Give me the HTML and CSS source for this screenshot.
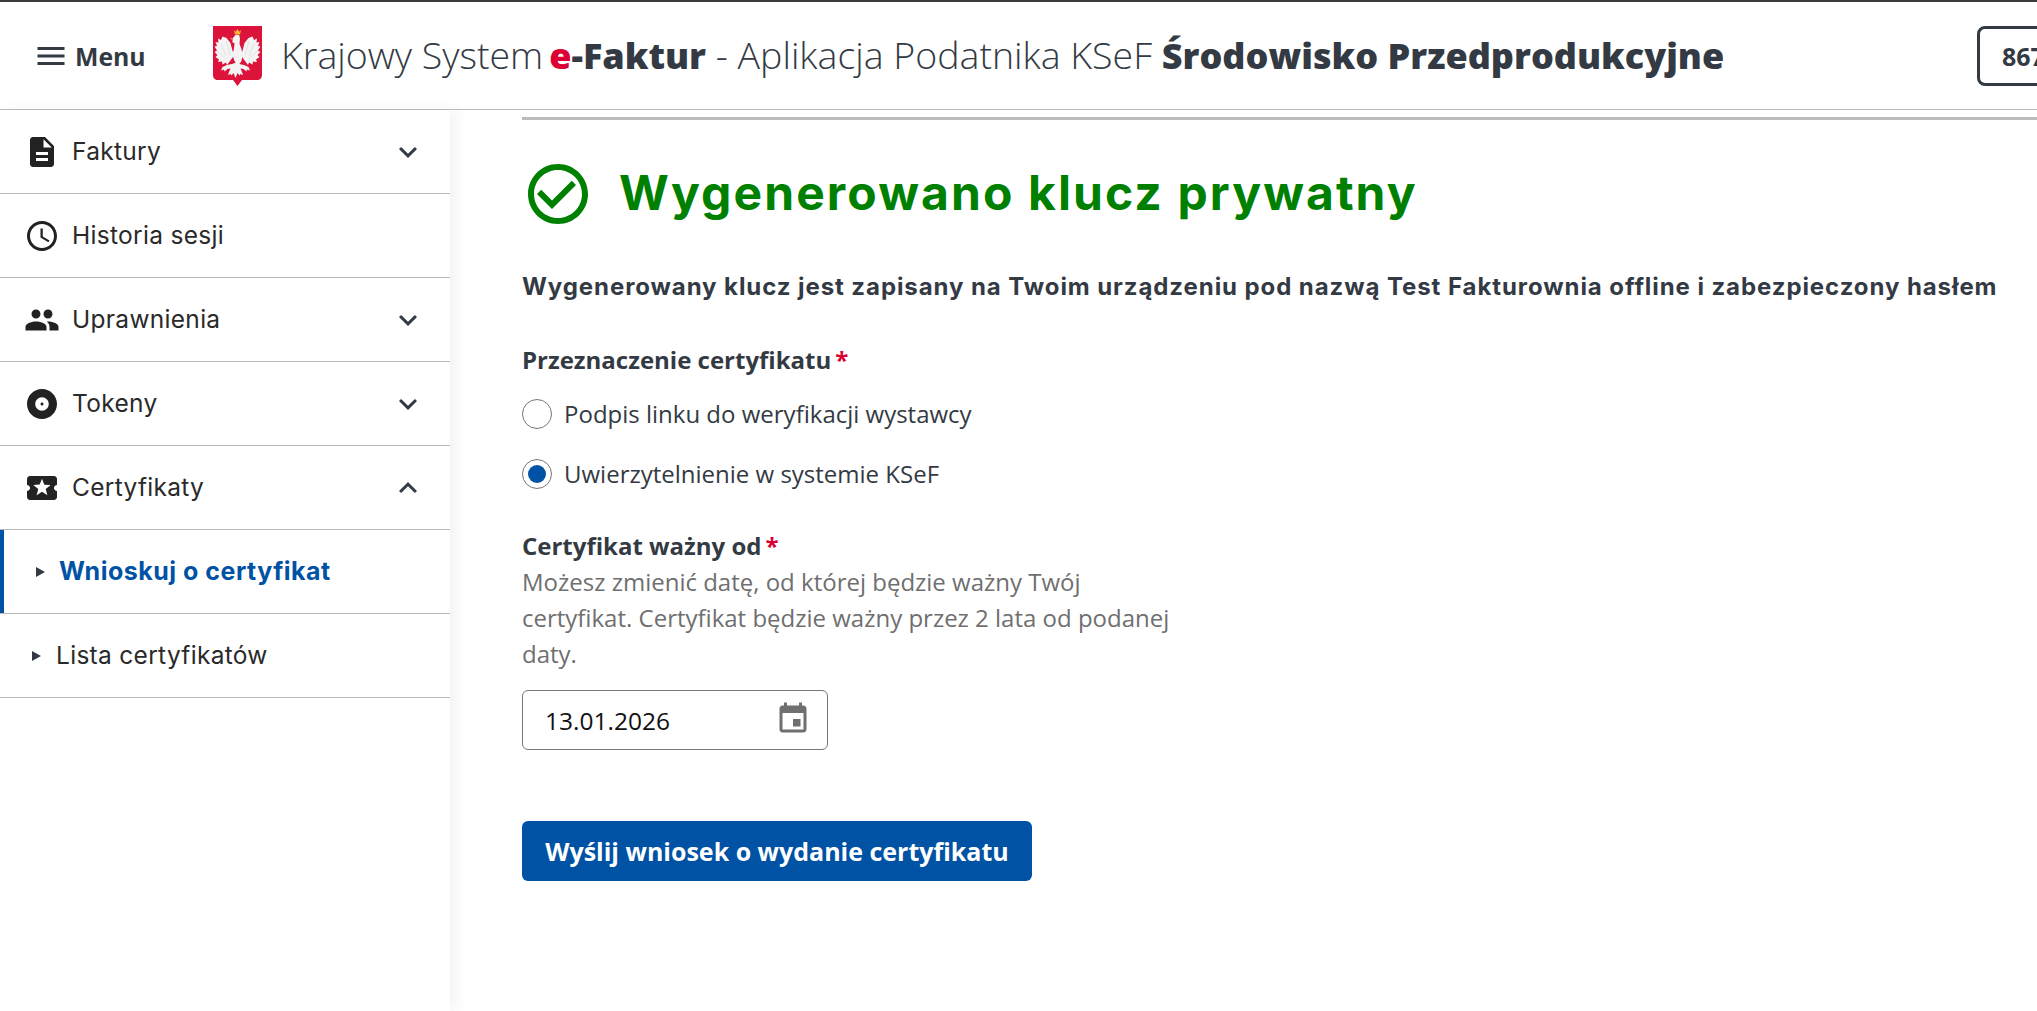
FILE: index.html
```html
<!DOCTYPE html>
<html lang="pl">
<head>
<meta charset="utf-8">
<title>Krajowy System e-Faktur</title>
<link rel="stylesheet" href="styles.css">
</head>
<body>
<header class="topbar">
  <button class="menu-btn" type="button">
    <svg class="ic36" viewBox="0 0 24 24"><path d="M3 18h18v-2H3v2zm0-5h18v-2H3v2zm0-7v2h18V6H3z"/></svg>
    <span>Menu</span>
  </button>
  <svg class="emblem" viewBox="0 0 49 60">
    <path fill="#dc143c" d="M0 0h49v49c0 3-2 5-5 5H29l-4.500 6-4.500-6H5c-3 0-5-2-5-5z"/>
    <path fill="#f5b82e" d="M21 4l1.800 1.800L24.500 3l1.700 2.800L28 4l-1 4.500h-5z"/>
    <g fill="#f4f4f4">
      <path d="M19.500 12.500l3-3.500h3.500l1 3-.5 6 2 5 1 6-1 6-3.500 5-3.500-5-2-6 1.500-7 .5-5-2-.5z"/>
      <path d="M19.500 25l-2-8-4-5-4-1.500L8 14l-3-1.500.5 4-3-.5 1.500 4-2.500.5 2.500 4-2.500 1.500 3 3-2 2 3.500 2.500-1 2.500 4-.5.5 3 3.500-2 1 2.500 3-4 3-4 1-4z"/>
      <path d="M29.500 25l2-8 4-5 4-1.500L41 14l3-1.500-.5 4 3-.5-1.500 4 2.500.5-2.500 4 2.500 1.500-3 3 2 2-3.500 2.500 1 2.500-4-.5-.5 3-3.500-2-1 2.500-3-4-3-4-1-4z"/>
      <path d="M24.500 36l-5.500 2-5 1-4.500 2-1.500 3.500 3-1 .5 2 3-2.500 3-.5-1.500 3.500-1 3 2.500-1 1 1.500 2-2.500 2 5 2-5 2 2.500 1-1.500 2.500 1-1-3-1.500-3.500 3 .5 3 2.500.5-2 3 1-1.500-3.500-4.500-2-5-1z"/>
    </g>
    <g stroke="#d8d8d8" stroke-width=".7" fill="none">
      <path d="M8 18l5 12M13 15l4 14M4 24l9 9"/>
      <path d="M41 18l-5 12M36 15l-4 14M45 24l-9 9"/>
    </g>
    <path fill="#f5b82e" d="M19 12l-2 .8 2 .8z"/>
  </svg>
  <h1 class="app-title">Krajowy System<b class="ef"><i>e</i>-Faktur</b> - Aplikacja Podatnika KSeF <b class="env">Środowisko Przedprodukcyjne</b></h1>
  <div class="nip">8672190431</div>
</header>
<div class="layout">
  <aside class="sidebar">
    <nav>
      <a class="row">
        <svg class="ic36 side-ic" viewBox="0 0 24 24"><path d="M14 2H6c-1.100 0-1.990.9-1.990 2L4 20c0 1.100.89 2 1.990 2H18c1.100 0 2-.9 2-2V8l-6-6zm2 16H8v-2h8v2zm0-4H8v-2h8v2zm-3-5V3.500L18.500 9H13z"/></svg>
        <span class="row-label">Faktury</span>
        <svg class="ic36 chev" viewBox="0 0 24 24"><path d="M16.590 8.590L12 13.170 7.410 8.590 6 10l6 6 6-6z"/></svg>
      </a>
      <a class="row">
        <svg class="ic36 side-ic" viewBox="0 0 24 24"><path d="M11.990 2C6.470 2 2 6.480 2 12s4.470 10 9.990 10C17.520 22 22 17.520 22 12S17.520 2 11.990 2zM12 20c-4.420 0-8-3.580-8-8s3.580-8 8-8 8 3.580 8 8-3.580 8-8 8zm.5-13H11v6l5.250 3.150.75-1.230-4.500-2.670z"/></svg>
        <span class="row-label">Historia sesji</span>
      </a>
      <a class="row">
        <svg class="ic36 side-ic" viewBox="0 0 24 24"><path d="M16 11c1.660 0 2.990-1.340 2.990-3S17.660 5 16 5c-1.660 0-3 1.340-3 3s1.340 3 3 3zm-8 0c1.660 0 2.990-1.340 2.990-3S9.660 5 8 5C6.340 5 5 6.340 5 8s1.340 3 3 3zm0 2c-2.330 0-7 1.170-7 3.500V19h14v-2.500c0-2.330-4.670-3.500-7-3.500zm8 0c-.29 0-.62.02-.97.05 1.160.84 1.970 1.970 1.970 3.450V19h6v-2.500c0-2.330-4.670-3.500-7-3.500z"/></svg>
        <span class="row-label">Uprawnienia</span>
        <svg class="ic36 chev" viewBox="0 0 24 24"><path d="M16.590 8.590L12 13.170 7.410 8.590 6 10l6 6 6-6z"/></svg>
      </a>
      <a class="row">
        <svg class="ic36 side-ic" viewBox="0 0 24 24"><path d="M12 2C6.480 2 2 6.480 2 12s4.480 10 10 10 10-4.480 10-10S17.520 2 12 2zm0 14.500c-2.490 0-4.500-2.010-4.500-4.500S9.510 7.500 12 7.500s4.500 2.010 4.500 4.500-2.010 4.500-4.500 4.500zm0-5.500c-.55 0-1 .45-1 1s.45 1 1 1 1-.45 1-1-.45-1-1-1z"/></svg>
        <span class="row-label">Tokeny</span>
        <svg class="ic36 chev" viewBox="0 0 24 24"><path d="M16.590 8.590L12 13.170 7.410 8.590 6 10l6 6 6-6z"/></svg>
      </a>
      <a class="row">
        <svg class="ic36 side-ic" viewBox="0 0 24 24"><path d="M20 12c0-1.100.9-2 2-2V6c0-1.100-.9-2-2-2H4c-1.100 0-1.990.9-1.990 2v4c1.100 0 1.990.9 1.990 2s-.89 2-2 2v4c0 1.100.9 2 2 2h16c1.100 0 2-.9 2-2v-4c-1.100 0-2-.9-2-2zm-4.420 4.800L12 14.500l-3.580 2.300 1.080-4.120-3.290-2.690 4.240-.25L12 5.800l1.540 3.950 4.240.25-3.290 2.690 1.090 4.110z"/></svg>
        <span class="row-label">Certyfikaty</span>
        <svg class="ic36 chev chev-up" viewBox="0 0 24 24"><path d="M16.590 8.590L12 13.170 7.410 8.590 6 10l6 6 6-6z"/></svg>
      </a>
      <a class="row sub active"><span class="tri"></span><span class="row-label">Wnioskuj o certyfikat</span></a>
      <a class="row sub"><span class="tri"></span><span class="row-label">Lista certyfikatów</span></a>
    </nav>
  </aside>
  <main class="content">
    <hr class="divider">
    <div class="title-row">
      <svg class="check" viewBox="0 0 24 24"><path d="M16.590 7.580L10 14.170l-3.590-3.580L5 12l5 5 8-8zM12 2C6.480 2 2 6.480 2 12s4.480 10 10 10 10-4.480 10-10S17.520 2 12 2zm0 18c-4.420 0-8-3.580-8-8s3.580-8 8-8 8 3.580 8 8-3.580 8-8 8z"/></svg>
      <h2>Wygenerowano klucz prywatny</h2>
    </div>
    <p class="lead">Wygenerowany klucz jest zapisany na Twoim urządzeniu pod nazwą Test Fakturownia offline i zabezpieczony hasłem</p>
    <div class="label first">Przeznaczenie certyfikatu<span class="req">*</span></div>
    <div class="radios">
      <div class="radio"><span class="dot"></span><span>Podpis linku do weryfikacji wystawcy</span></div>
      <div class="radio on"><span class="dot"></span><span>Uwierzytelnienie w systemie KSeF</span></div>
    </div>
    <div class="label second">Certyfikat ważny od<span class="req">*</span></div>
    <p class="help">Możesz zmienić datę, od której będzie ważny Twój certyfikat. Certyfikat będzie ważny przez 2 lata od podanej daty.</p>
    <div class="date">
      <span>13.01.2026</span>
      <svg class="ic36 cal" viewBox="0 0 24 24"><path d="M17 12h-5v5h5v-5zM16 1v2H8V1H6v2H5c-1.110 0-1.990.9-1.990 2L3 19c0 1.100.89 2 2 2h14c1.100 0 2-.9 2-2V5c0-1.100-.9-2-2-2h-1V1h-2zm3 18H5V8h14v11z"/></svg>
    </div>
    <button class="submit" type="button">Wyślij wniosek o wydanie certyfikatu</button>
  </main>
</div>
</body>
</html>
```
FILE: styles.css
```css
* { box-sizing: border-box; }
html, body { margin: 0; height: 100%; overflow: hidden; background: #fff; }
body { font-family: "Open Sans", sans-serif; color: #333a43; width: 2037px; height: 1011px; }
.ic36 { width: 36px; height: 36px; fill: currentColor; flex: none; display: block; }

.topbar {
  height: 110px;
  border-top: 2px solid #3a3a3a;
  border-bottom: 1px solid #bdbdbd;
  display: flex;
  align-items: center;
  padding-left: 33px;
  overflow: hidden;
}
.menu-btn {
  display: flex; align-items: center; gap: 6px;
  border: 0; background: none; padding: 0; margin: 0;
  font: 700 24.800px "Open Sans", sans-serif; color: #333a43;
  width: 180px; flex: none;
}
.emblem { width: 49px; height: 60px; flex: none; }
.app-title {
  margin: 0 0 2px 19px;
  font: 300 37.500px/1 "Open Sans", sans-serif;
  white-space: nowrap;
  flex: none;
  width: 1696px;
  color: #333a43;
}
.app-title b { font-weight: 800; }
.app-title .ef { margin-left: 6px; font-size: 36px; }
.app-title .env { font-size: 36px; }
.app-title i { font-style: normal; color: #dc0032; }
.nip {
  flex: none;
  width: 200px; height: 60px;
  border: 3px solid #333a43; border-radius: 8px;
  padding-left: 22px;
  font-weight: 700; font-size: 25px; line-height: 54px;
}

.layout { display: flex; height: 901px; }
.sidebar {
  width: 450px; flex: none; height: 100%;
  box-shadow: 6px 0 14px rgba(0,0,0,.05);
  position: relative;
}
.row {
  display: flex; align-items: center;
  height: 84px;
  border-bottom: 1px solid #b9b9b9;
  padding-left: 24px;
  color: #2a2a2a;
  font: 400 24.500px "Inter", sans-serif;
}
.side-ic { color: #222; }
.row-label { margin: 0 0 2px 12px; letter-spacing: .3px; }
.chev { margin-left: auto; margin-right: 24px; color: #333a43; }
.chev-up { transform: rotate(180deg); }
.sub { padding-left: 32px; }
.sub .row-label { margin-left: 15px; }
.sub.active { padding-left: 32px; box-shadow: inset 4px 0 0 #0052a5; }
.sub.active .tri { margin-left: 4px; }
.sub.active .row-label { margin-left: 14px; font-weight: 700; font-size: 25px; letter-spacing: .5px; color: #0052a5; }
.tri {
  width: 0; height: 0; flex: none;
  border-left: 9px solid #333a43;
  border-top: 5px solid transparent;
  border-bottom: 5px solid transparent;
}

.content { flex: 1; padding-left: 72px; min-width: 0; }
.divider { border: 0; height: 3px; background: #bbb; margin: 7px 0 0; }
.title-row { display: flex; align-items: center; gap: 25px; margin-top: 38px; height: 72px; }
.check { width: 72px; height: 72px; fill: #008000; flex: none; }
.title-row h2 {
  margin: -2px 0 0; color: #008000;
  font: 700 48px/72px "Inter", sans-serif;
  letter-spacing: 2.100px;
  white-space: nowrap;
}
.lead {
  margin: 39px 0 0;
  font: 700 24px/36px "Inter", sans-serif;
  letter-spacing: .92px;
  white-space: nowrap;
}
.label { font-weight: 700; font-size: 24px; line-height: 36px; }
.label.first { margin-top: 37px; }
.label.second { margin-top: 39px; }
.req { color: #dc0032; margin-left: 4px; }
.radios { display: flex; flex-direction: column; gap: 30px; margin-top: 21px; }
.radio { display: flex; align-items: center; gap: 12px; font-size: 24px; line-height: 30px; height: 30px; }
.dot {
  width: 30px; height: 30px; border-radius: 50%;
  border: 1px solid #767676; background: #fff; flex: none;
  display: flex; align-items: center; justify-content: center;
}
.on .dot::after { content: ""; width: 18px; height: 18px; border-radius: 50%; background: #0052a5; }
.help { margin: 0; max-width: 660px; font-size: 24px; line-height: 36px; color: #6f6f6f; }
.date {
  margin-top: 18px;
  width: 306px; height: 60px;
  border: 1px solid #767676; border-radius: 6px;
  display: flex; align-items: center; justify-content: space-between;
  padding: 0 16px 0 22px;
  font-size: 24.500px; color: #111;
}
.cal { color: #6f6f6f; margin-top: -2px; }
.submit {
  display: block;
  margin: 71px 0 0;
  width: 510px; height: 60px;
  border: 0; border-radius: 6px;
  background: #0052a5; color: #fff;
  font: 700 25px "Open Sans", sans-serif;
}
```
